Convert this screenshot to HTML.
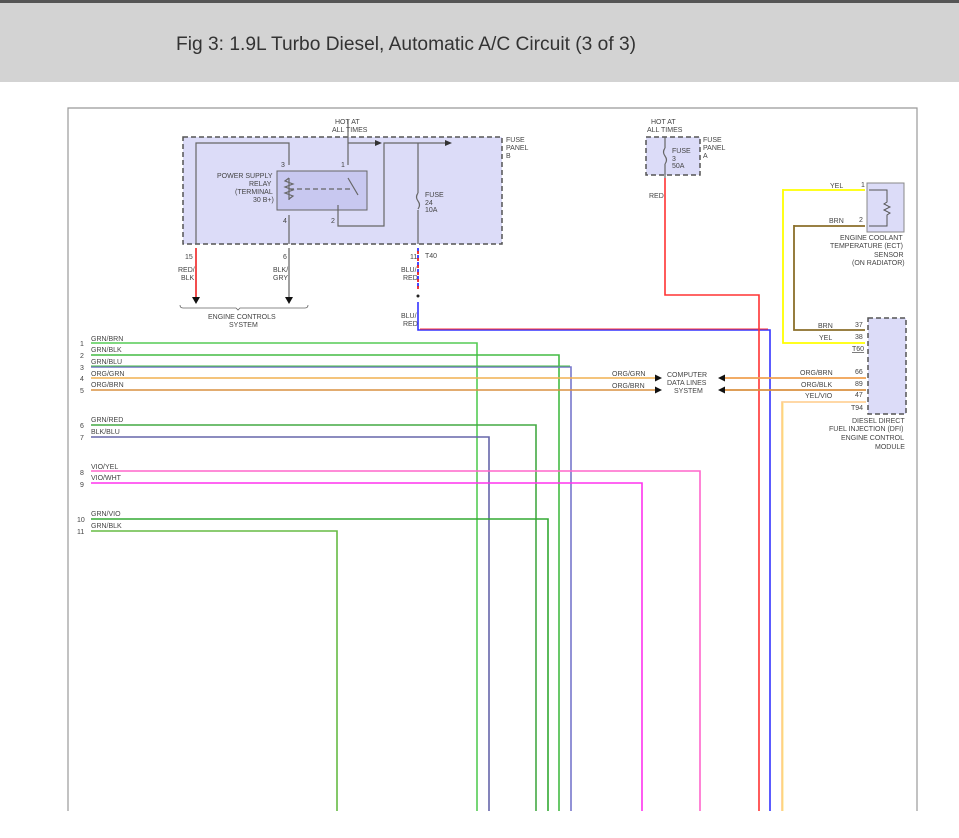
<!DOCTYPE html>
<html><head><meta charset="utf-8"><style>
html,body{margin:0;padding:0;background:#fff;width:959px;height:838px;overflow:hidden}
.hdr{position:absolute;left:0;top:0;width:959px;height:82px;background:#d3d3d3;border-top:3px solid #555;box-sizing:border-box}
.hdr div{position:absolute;left:176px;top:31px;font-family:"Liberation Sans",sans-serif;font-size:19px;color:#333;transform:scaleX(1.01);transform-origin:left}
svg{position:absolute;left:0;top:0}
text{font-family:"Liberation Sans",sans-serif;font-size:7px;fill:#444}
</style></head><body>
<div class="hdr"><div>Fig 3: 1.9L Turbo Diesel, Automatic A/C Circuit (3 of 3)</div></div>
<svg width="959" height="838" viewBox="0 0 959 838">
<path d="M68 811 V108 H917 V811" fill="none" stroke="#999" stroke-width="1.2"/>
<rect x="183" y="137" width="319" height="107" fill="#dcdcf8" stroke="#555" stroke-width="1.5" stroke-dasharray="5,3"/>
<rect x="277" y="171" width="90" height="39" fill="#c8c8f0" stroke="#666" stroke-width="1"/>
<g fill="none" stroke="#666" stroke-width="1.2">
<path d="M196 244 V143 H289 V165"/>
<path d="M289 215 V244"/>
<path d="M348 120 V165"/><path d="M348 143 H375"/>
<path d="M338 215 V226 H384 V143 H445"/>
<path d="M418 143 V193 M418 210 V244"/>
<path d="M418 193 q-3 4 0 8 q3 4 0 8"/>
<path d="M289 178 l-4 3 l8 3 l-8 3 l8 3 l-8 3 l8 3 l-4 3 M289 178 V200"/>
<path d="M289 189 H350" stroke-dasharray="5,3"/>
<path d="M348 178 l10 17"/>
<path d="M338 215 V205"/>
</g>
<path d="M375 140 l7 3 l-7 3z M445 140 l7 3 l-7 3z" fill="#333"/>
<text x="335" y="124">HOT AT</text><text x="332" y="132">ALL TIMES</text>
<text x="506" y="142">FUSE</text><text x="506" y="150">PANEL</text><text x="506" y="158">B</text>
<text x="281" y="167">3</text><text x="341" y="167">1</text>
<text x="217" y="178">POWER SUPPLY</text><text x="249" y="186">RELAY</text><text x="235" y="194">(TERMINAL</text><text x="253" y="202">30 B+)</text>
<text x="283" y="223">4</text><text x="331" y="223">2</text>
<text x="425" y="197">FUSE</text><text x="425" y="205">24</text><text x="425" y="212">10A</text>
<text x="185" y="259">15</text><text x="283" y="259">6</text><text x="410" y="259">11</text><text x="425" y="258">T40</text>
<text x="178" y="272">RED/</text><text x="181" y="280">BLK</text>
<text x="273" y="272">BLK/</text><text x="273" y="280">GRY</text>
<text x="401" y="272">BLU/</text><text x="403" y="280">RED</text>
<text x="401" y="318">BLU/</text><text x="403" y="326">RED</text>
<path d="M196 248 V297" stroke="#e22" stroke-width="1.6"/>
<path d="M289 248 V297" stroke="#888" stroke-width="1.6"/>
<path d="M192 297 h8 l-4 7z M285 297 h8 l-4 7z" fill="#111"/>
<path d="M180 305 q0 3 3 3 H236 l2 2 l2 -2 H305 q3 0 3 -3" fill="none" stroke="#666" stroke-width="0.8"/>
<text x="208" y="319">ENGINE CONTROLS</text><text x="229" y="327">SYSTEM</text>
<path d="M418 248 V290" stroke="#33f" stroke-width="1.8" stroke-dasharray="4,3"/>
<path d="M418 248 V290" stroke="#e22" stroke-width="1.8" stroke-dasharray="3,4" stroke-dashoffset="4"/>
<circle cx="418" cy="296" r="1.5" fill="#222"/>
<path d="M418 302 V330 H770 V811" fill="none" stroke="#33f" stroke-width="1.6"/>
<path d="M420 329 H768" stroke="#f33" stroke-width="1"/>
<rect x="646" y="137" width="54" height="38" fill="#dcdcf8" stroke="#555" stroke-width="1.5" stroke-dasharray="5,3"/>
<path d="M665 137 V148 M665 164 V178 M665 148 q-3 4 0 8 q3 4 0 8" fill="none" stroke="#666" stroke-width="1.2"/>
<text x="651" y="124">HOT AT</text><text x="647" y="132">ALL TIMES</text>
<text x="672" y="153">FUSE</text><text x="672" y="161">3</text><text x="672" y="168">50A</text>
<text x="703" y="142">FUSE</text><text x="703" y="150">PANEL</text><text x="703" y="158">A</text>
<text x="649" y="198">RED</text>
<path d="M665 178 V295 H759 V811" fill="none" stroke="#f33" stroke-width="1.6"/>
<rect x="867" y="183" width="37" height="49" fill="#dcdcf8" stroke="#888" stroke-width="1"/>
<path d="M869 190 H887 V202 l-3 2 l6 3 l-6 3 l6 3 l-3 2 V226 H869" fill="none" stroke="#555" stroke-width="1"/>
<path d="M783 190 H865 M783 189 V343 H865" fill="none" stroke="#ff0" stroke-width="1.8"/>
<path d="M794 226 H865 M794 225 V330 H865" fill="none" stroke="#8b6f2a" stroke-width="1.8"/>
<text x="830" y="188">YEL</text><text x="861" y="187">1</text>
<text x="829" y="223">BRN</text><text x="859" y="222">2</text>
<text x="840" y="240">ENGINE COOLANT</text><text x="830" y="248">TEMPERATURE (ECT)</text><text x="874" y="257">SENSOR</text><text x="852" y="265">(ON RADIATOR)</text>
<rect x="868" y="318" width="38" height="96" fill="#dcdcf8" stroke="#555" stroke-width="1.5" stroke-dasharray="5,3"/>
<text x="818" y="328">BRN</text><text x="855" y="327">37</text>
<text x="819" y="340">YEL</text><text x="855" y="339">38</text>
<text x="852" y="351" text-decoration="underline">T60</text>
<text x="800" y="375">ORG/BRN</text><text x="855" y="374">66</text>
<text x="801" y="387">ORG/BLK</text><text x="855" y="386">89</text>
<text x="805" y="398">YEL/VIO</text><text x="855" y="397">47</text>
<text x="851" y="410">T94</text>
<text x="852" y="423">DIESEL DIRECT</text><text x="829" y="431">FUEL INJECTION (DFI)</text><text x="841" y="440">ENGINE CONTROL</text><text x="875" y="449">MODULE</text>
<path d="M782 811 V402 H866" fill="none" stroke="#fc8" stroke-width="1.6"/>
<path d="M783 811 V403" stroke="#fd6" stroke-width="0.8"/>
<path d="M722 378 H866" stroke="#f0a050" stroke-width="1.8"/>
<path d="M722 390 H866" stroke="#d99040" stroke-width="1.8"/>
<path d="M718 378 l7 -3.5 v7z M718 390 l7 -3.5 v7z M662 378 l-7 -3.5 v7z M662 390 l-7 -3.5 v7z" fill="#111"/>
<text x="667" y="377">COMPUTER</text><text x="667" y="385">DATA LINES</text><text x="674" y="393">SYSTEM</text>
<text x="612" y="376">ORG/GRN</text><text x="612" y="388">ORG/BRN</text>
<g fill="none" stroke-width="1.6">
<path d="M91 343 H477 V811" stroke="#5c5"/>
<path d="M91 355 H559 V811" stroke="#4b4"/>
<path d="M91 367 H571 V811" stroke="#77c"/>
<path d="M91 366 H570" stroke="#4b4" stroke-width="1"/>
<path d="M91 378 H655" stroke="#f0b050"/>
<path d="M91 390 H655" stroke="#d99040"/>
<path d="M91 425 H536 V811" stroke="#4a4"/>
<path d="M91 437 H489 V811" stroke="#66a"/>
<path d="M91 471 H700 V811" stroke="#f6c"/>
<path d="M91 483 H642 V811" stroke="#f3e"/>
<path d="M91 519 H548 V811" stroke="#3a3"/>
<path d="M91 531 H337 V811" stroke="#6b4"/>
</g>
<g>
<text x="91" y="341">GRN/BRN</text><text x="91" y="352">GRN/BLK</text><text x="91" y="364">GRN/BLU</text>
<text x="91" y="376">ORG/GRN</text><text x="91" y="387">ORG/BRN</text>
<text x="91" y="422">GRN/RED</text><text x="91" y="434">BLK/BLU</text>
<text x="91" y="469">VIO/YEL</text><text x="91" y="480">VIO/WHT</text>
<text x="91" y="516">GRN/VIO</text><text x="91" y="528">GRN/BLK</text>
</g>
<g style="fill:#55a">
<text x="80" y="346">1</text><text x="80" y="358">2</text><text x="80" y="370">3</text><text x="80" y="381">4</text><text x="80" y="393">5</text>
<text x="80" y="428">6</text><text x="80" y="440">7</text><text x="80" y="475">8</text><text x="80" y="487">9</text>
<text x="77" y="522">10</text><text x="77" y="534">11</text>
</g>
</svg>
</body></html>
